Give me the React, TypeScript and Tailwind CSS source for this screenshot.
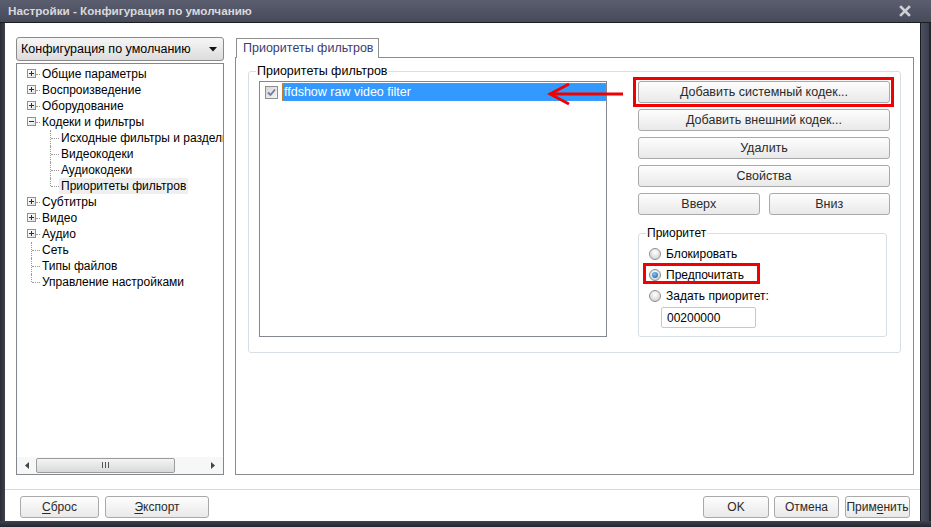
import type { ReactNode } from "react";

type Node = {
  label: string;
  level: 0 | 1;
  kind: "plus" | "minus" | "leaf";
  line?: "full" | "top";
  selected?: boolean;
};

const tree: Node[] = [
  { label: "Общие параметры", level: 0, kind: "plus" },
  { label: "Воспроизведение", level: 0, kind: "plus" },
  { label: "Оборудование", level: 0, kind: "plus" },
  { label: "Кодеки и фильтры", level: 0, kind: "minus" },
  { label: "Исходные фильтры и разделители", level: 1, kind: "leaf", line: "full" },
  { label: "Видеокодеки", level: 1, kind: "leaf", line: "full" },
  { label: "Аудиокодеки", level: 1, kind: "leaf", line: "full" },
  { label: "Приоритеты фильтров", level: 1, kind: "leaf", line: "top", selected: true },
  { label: "Субтитры", level: 0, kind: "plus" },
  { label: "Видео", level: 0, kind: "plus" },
  { label: "Аудио", level: 0, kind: "plus" },
  { label: "Сеть", level: 0, kind: "leaf", line: "full" },
  { label: "Типы файлов", level: 0, kind: "leaf", line: "full" },
  { label: "Управление настройками", level: 0, kind: "leaf", line: "top" },
];

function ExpandBox({ open }: { open: boolean }) {
  return (
    <span className="relative block h-[9px] w-[9px] border border-[#919191] bg-gradient-to-br from-white to-[#e4e4e4]">
      <span className="absolute left-[1px] top-[3px] h-px w-[5px] bg-[#303030]" />
      {!open && <span className="absolute left-[3px] top-[1px] h-[5px] w-px bg-[#303030]" />}
    </span>
  );
}

function TreeRow({ node }: { node: Node }) {
  const vline =
    node.line === "full" ? "top-0 bottom-0" : node.line === "top" ? "top-0 h-[8px]" : "";
  return (
    <div className="flex h-[16px] items-center whitespace-nowrap">
      {node.level === 1 && <span className="w-[19px] flex-none" />}
      <span className="relative h-[16px] w-[13px] flex-none">
        {node.kind === "leaf" ? (
          <>
            <span className={`absolute left-[4px] border-l border-dotted border-[#9a9a9a] ${vline}`} />
            <span className="absolute left-[5px] top-[8px] w-[8px] border-t border-dotted border-[#9a9a9a]" />
          </>
        ) : (
          <>
            <span className="absolute left-0 top-[3px]">
              <ExpandBox open={node.kind === "minus"} />
            </span>
            <span className="absolute left-[9px] top-[8px] w-[4px] border-t border-dotted border-[#9a9a9a]" />
          </>
        )}
      </span>
      <span className={`px-[2px] leading-[16px] text-black ${node.selected ? "bg-[#efefef]" : ""}`}>
        {node.label}
      </span>
    </div>
  );
}

function Button({ children, className = "" }: { children: ReactNode; className?: string }) {
  return (
    <div
      className={`flex h-[22px] items-center justify-center overflow-hidden whitespace-nowrap rounded-[3px] border border-[#a9a9a9] bg-gradient-to-b from-[#fdfdfd] to-[#e9e9e9] text-[#2a2a2a] ${className}`}
    >
      {children}
    </div>
  );
}

function Radio({ checked }: { checked?: boolean }) {
  return (
    <span className="flex h-[12px] w-[12px] flex-none items-center justify-center rounded-full border border-[#8d8d8d] bg-[radial-gradient(circle_at_50%_35%,#ffffff,#c9c9c9)]">
      {checked && (
        <span className="h-[6px] w-[6px] rounded-full bg-[radial-gradient(circle_at_40%_35%,#7ec3f5,#0d5ea8)]" />
      )}
    </span>
  );
}

export default function App() {
  return (
    <div className="flex h-[527px] w-[931px] flex-col overflow-hidden bg-[#2f313a] font-['Liberation_Sans','DejaVu_Sans',sans-serif] text-[12px]">
      {/* title bar */}
      <div className="flex h-[23px] flex-none items-center justify-between border-b border-[#1c1d22] bg-gradient-to-b from-[#5a5e6f] to-[#474a59] pl-[8px] pr-[20px]">
        <span className="text-[11.7px] font-bold text-[#d9d9dc]">Настройки - Конфигурация по умолчанию</span>
        <svg width="12" height="12" viewBox="0 0 12 12">
          <path d="M2 2 L10 10 M10 2 L2 10" stroke="#cfd0d4" strokeWidth="2.6" strokeLinecap="square" />
        </svg>
      </div>

      <div className="flex flex-1">
        <div className="w-[5px] flex-none bg-gradient-to-r from-[#2a2c33] to-[#3e4150]" />

        {/* client area */}
        <div className="flex flex-1 flex-col bg-white pt-[14px]">
          <div className="flex h-[438px] pl-[11px] pr-[6px]">
            {/* left column */}
            <div className="flex w-[208px] flex-none flex-col">
              <div className="flex h-[24px] items-center justify-between rounded-[3px] border border-[#8a8a8a] bg-gradient-to-b from-[#f6f6f6] to-[#dcdcdc] pl-[4px] pr-[6px] text-[12.5px] text-black">
                <span>Конфигурация по умолчанию</span>
                <svg width="8" height="5" viewBox="0 0 8 5">
                  <path d="M0 0 H8 L4 4.5 Z" fill="#111" />
                </svg>
              </div>
              <div className="mt-[2px] flex flex-1 flex-col overflow-hidden border border-[#828790]">
                <div className="flex-1 overflow-hidden pl-[10px] pt-[2px]">
                  {tree.map((n) => (
                    <TreeRow key={n.label} node={n} />
                  ))}
                </div>
                <div className="flex h-[17px] flex-none items-center bg-[#f7f7f7] pb-[1px]">
                  <span className="flex w-[19px] justify-center">
                    <svg width="4" height="7" viewBox="0 0 4 7">
                      <path d="M4 0 V7 L0 3.5 Z" fill="#444" />
                    </svg>
                  </span>
                  <span className="flex h-[15px] w-[139px] items-center justify-center rounded-[2px] border border-[#9c9c9c] bg-gradient-to-b from-[#f4f4f4] to-[#d9d9d9]">
                    <span className="flex gap-[2px]">
                      <span className="h-[6px] w-px bg-[#555]" />
                      <span className="h-[6px] w-px bg-[#555]" />
                      <span className="h-[6px] w-px bg-[#555]" />
                    </span>
                  </span>
                  <span className="flex-1" />
                  <span className="flex w-[20px] justify-center">
                    <svg width="4" height="7" viewBox="0 0 4 7">
                      <path d="M0 0 V7 L4 3.5 Z" fill="#444" />
                    </svg>
                  </span>
                </div>
              </div>
            </div>

            {/* right column */}
            <div className="ml-[11px] flex flex-1 flex-col">
              <div className="relative z-10 -mb-px ml-[1px] mt-[1px] flex h-[20px] w-[143px] items-center whitespace-nowrap border border-b-0 border-[#8e8f8f] bg-white pl-[6px] text-[12.5px] text-[#3a3c72]">
                Приоритеты фильтров
              </div>
              <div className="flex-1 border border-[#8c8c8c] px-[12px] pt-[13px]">
                {/* group box */}
                <div className="relative flex rounded-[3px] border border-[#d5dfe5] pb-[15px] pl-[10px] pr-[10px] pt-[8px]">
                  <span className="absolute -top-[9px] left-[7px] whitespace-nowrap bg-white px-[1px] text-[12.5px] leading-[16px] text-black">
                    Приоритеты фильтров
                  </span>
                  <div className="mt-[1px] h-[256px] w-[348px] flex-none border border-[#828790] pl-[5px] pt-[1px]">
                    <div className="flex h-[18px] items-center">
                      <span className="flex h-[13px] w-[13px] flex-none items-center justify-center border border-[#8f8f8f] bg-gradient-to-br from-[#d6d6d6] to-[#f5f5f5]">
                        <svg width="9" height="9" viewBox="0 0 9 9">
                          <path d="M1 4.5 L3.5 7 L8 1.5" fill="none" stroke="#6f7ba0" strokeWidth="1.8" />
                        </svg>
                      </span>
                      <span className="ml-[4px] flex h-[18px] flex-1 items-center border border-dotted border-[#c9843a] bg-[#3399ff] pl-[1px] text-[12.5px] text-white">
                        ffdshow raw video filter
                      </span>
                    </div>
                  </div>

                  <div className="ml-[31px] flex w-[252px] flex-none flex-col gap-[6px] pt-[1px] text-[12.5px]">
                    <div className="relative">
                      <Button>Добавить системный кодек...</Button>
                      <span className="absolute -left-[5px] -top-[4px] h-[30px] w-[261px] border-[3px] border-[#f00000]" />
                    </div>
                    <Button>Добавить внешний кодек...</Button>
                    <Button>Удалить</Button>
                    <Button>Свойства</Button>
                    <div className="flex gap-[9px]">
                      <Button className="flex-1">Вверх</Button>
                      <Button className="flex-1">Вниз</Button>
                    </div>

                    {/* priority group */}
                    <div className="relative mt-[12px] h-[104px] w-[249px] rounded-[3px] border border-[#d5dfe5] pl-[10px] pt-[9px] text-[12px]">
                      <span className="absolute -top-[9px] left-[7px] bg-white px-[1px] leading-[16px] text-black">
                        Приоритет
                      </span>
                      <div className="flex h-[21px] items-center gap-[5px] text-black">
                        <Radio />
                        <span>Блокировать</span>
                      </div>
                      <div className="relative flex h-[21px] w-fit items-center gap-[5px] text-black">
                        <Radio checked />
                        <span>Предпочитать</span>
                        <span className="absolute -left-[6px] -top-[1px] h-[21px] w-[117px] border-[3px] border-[#f00000]" />
                      </div>
                      <div className="flex h-[21px] items-center gap-[5px] text-black">
                        <Radio />
                        <span>Задать приоритет:</span>
                      </div>
                      <div className="ml-[12px] mt-[1px] flex h-[21px] w-[95px] items-center rounded-[2px] border border-[#c8c8c8] pl-[5px] text-black">
                        00200000
                      </div>
                    </div>
                  </div>

                  {/* annotation arrow */}
                  <svg
                    className="absolute left-[298px] top-[9px]"
                    width="78"
                    height="26"
                    viewBox="0 0 78 26"
                  >
                    <path d="M3 13 H76" stroke="#f00000" strokeWidth="3" />
                    <path d="M22 3 L3 13 L22 23" fill="none" stroke="#f00000" strokeWidth="3" />
                  </svg>
                </div>
              </div>
            </div>
          </div>

          {/* bottom bar */}
          <div className="mt-[14px] flex border-t border-[#dadada] pb-[3px] pl-[15px] pr-[10px] pt-[6px]">
            <Button className="w-[79px]">
              <span className="underline underline-offset-2">С</span>брос
            </Button>
            <Button className="ml-[6px] w-[104px]">
              <span className="underline underline-offset-2">Э</span>кспорт
            </Button>
            <span className="flex-1" />
            <Button className="w-[66px]">OK</Button>
            <Button className="ml-[5px] w-[65px]">Отмена</Button>
            <Button className="ml-[6px] w-[65px]">
              Прим<span className="underline underline-offset-2">е</span>нить
            </Button>
          </div>
        </div>

        <div className="flex w-[11px] flex-none">
          <div className="w-px bg-[#1c1d22]" />
          <div className="flex-1 bg-gradient-to-r from-[#4d5060] to-[#3b3e4b]" />
          <div className="w-[2px] bg-[#24262d]" />
        </div>
      </div>
      <div className="h-[6px] flex-none bg-gradient-to-b from-[#3e4150] to-[#24262d]" />
    </div>
  );
}
